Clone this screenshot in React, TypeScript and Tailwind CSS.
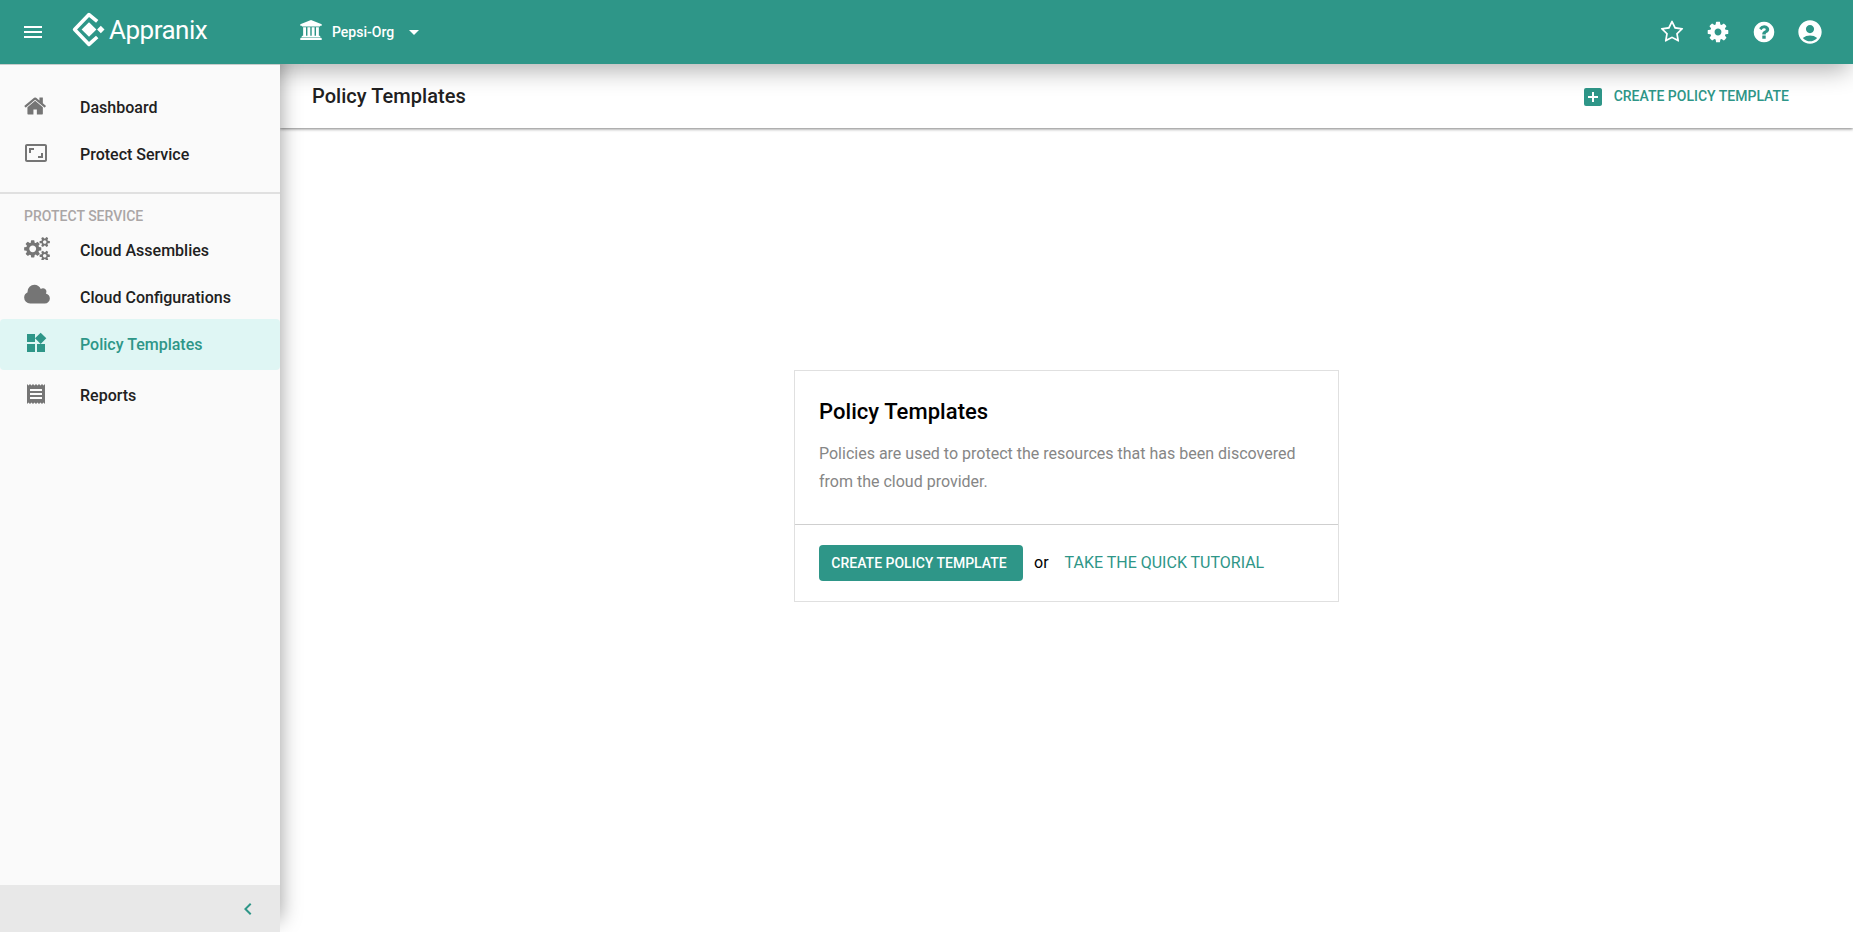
import React from "react";
import {
  MdMenu,
  MdAspectRatio,
  MdWidgets,
  MdReceipt,
  MdAccountCircle,
  MdAddBox,
  MdArrowDropDown,
  MdChevronLeft,
} from "react-icons/md";

const paths = {
  home: "M1408 992v480q0 26-19 45t-45 19h-384v-384h-256v384h-384q-26 0-45-19t-19-45v-480q0-1 .5-3t.5-3l575-474 575 474q1 2 1 6zm223-69l-62 74q-8 9-21 11h-3q-13 0-21-7l-692-577-692 577q-12 8-24 7-13-2-21-11l-62-74q-8-10-7-23.5t11-21.5l719-599q32-26 76-26t76 26l244 204v-195q0-14 9-23t23-9h192q14 0 23 9t9 23v408l219 182q10 8 11 21.5t-7 23.5z",
  cloud:
    "M1984 1152q0 159-112.5 271.5t-271.5 112.5h-1088q-185 0-316.5-131.5t-131.5-316.5q0-132 71-241.5t187-163.5q-2-28-2-43 0-212 150-362t362-150q158 0 286.5 88t187.5 230q70-62 166-62 106 0 181 75t75 181q0 75-41 138 129 30 213 134.5t84 239.5z",
  cogs: "M896 960q0-106-75-181t-181-75-181 75-75 181 75 181 181 75 181-75 75-181zm768 512q0-52-38-90t-90-38-90 38-38 90q0 53 37.5 90.5t90.5 37.5 90.5-37.5 37.5-90.5zm0-1024q0-52-38-90t-90-38-90 38-38 90q0 53 37.5 90.5t90.5 37.5 90.5-37.5 37.5-90.5zm-384 421v185q0 10-7 19.5t-16 10.5l-155 24q-11 35-32 76 34 48 90 115 7 11 7 20 0 12-7 19-23 30-82.5 89.5t-78.5 59.5q-11 0-21-7l-115-90q-37 19-77 31-11 108-23 155-7 24-30 24h-186q-11 0-20-7.5t-10-17.5l-23-153q-34-10-75-31l-118 89q-7 7-20 7-11 0-21-8-144-133-144-160 0-9 7-19 10-14 41-53t47-61q-23-44-35-82l-152-24q-10-1-17-9.5t-7-19.5v-185q0-10 7-19.5t16-10.5l155-24q11-35 32-76-34-48-90-115-7-11-7-20 0-12 7-20 22-30 82-89t79-59q11 0 21 7l115 90q34-18 77-32 11-108 23-154 7-24 30-24h186q11 0 20 7.5t10 17.5l23 153q34 10 75 31l118-89q8-7 20-7 11 0 21 8 144 133 144 160 0 8-7 19-12 16-42 54t-45 60q23 48 34 82l152 23q10 2 17 10.5t7 19.5zm640 533v140q0 16-149 31-12 27-30 52 51 113 51 138 0 4-4 7-122 71-124 71-8 0-46-47t-52-68q-20 2-30 2t-30-2q-14 21-52 68t-46 47q-2 0-124-71-4-3-4-7 0-25 51-138-18-25-30-52-149-15-149-31v-140q0-16 149-31 13-29 30-52-51-113-51-138 0-4 4-7 4-2 35-20t59-34 30-16q8 0 46 46.5t52 67.5q20-2 30-2t30 2q51-71 92-112l6-2q4 0 124 70 4 3 4 7 0 25-51 138 17 23 30 52 149 15 149 31zm0-1024v140q0 16-149 31-12 27-30 52 51 113 51 138 0 4-4 7-122 71-124 71-8 0-46-47t-52-68q-20 2-30 2t-30-2q-14 21-52 68t-46 47q-2 0-124-71-4-3-4-7 0-25 51-138-18-25-30-52-149-15-149-31v-140q0-16 149-31 13-29 30-52-51-113-51-138 0-4 4-7 4-2 35-20t59-34 30-16q8 0 46 46.5t52 67.5q20-2 30-2t30 2q51-71 92-112l6-2q4 0 124 70 4 3 4 7 0 25-51 138 17 23 30 52 149 15 149 31z",
  bank: "M960 0l960 384v128h-128q0 26-20.5 45t-48.5 19h-1526q-28 0-48.5-19t-20.5-45h-128v-128zm-704 640h256v768h128v-768h256v768h128v-768h256v768h128v-768h256v768h59q28 0 48.5 19t20.5 45v64h-1664v-64q0-26 20.5-45t48.5-19h59v-768zm1595 960q28 0 48.5 19t20.5 45v128h-1920v-128q0-26 20.5-45t48.5-19h1782z",
  star: "M1201 1004l306-297-422-62-189-382-189 382-422 62 306 297-73 421 378-199 377 199zm527-357q0 22-26 48l-363 354 86 500q1 7 1 20 0 50-41 50-19 0-40-12l-449-236-449 236q-22 12-40 12-21 0-31.5-14.5t-10.5-35.5q0-6 2-20l86-500-364-354q-25-27-25-48 0-37 56-46l502-73 225-455q19-41 49-41t49 41l225 455 502 73q56 9 56 46z",
  cog: "M1152 896q0-106-75-181t-181-75-181 75-75 181 75 181 181 75 181-75 75-181zm512-109v222q0 12-8 23t-20 13l-185 28q-19 54-39 91 35 50 107 138 10 12 10 25t-9 23q-27 37-99 108t-94 71q-12 0-26-9l-138-108q-44 23-91 38-16 136-29 186-7 28-36 28h-222q-14 0-24.5-8.5t-11.5-21.5l-28-184q-49-16-90-37l-141 107q-10 9-25 9-14 0-25-11-126-114-165-168-7-10-7-23 0-12 8-23 15-21 51-66.5t54-70.5q-27-50-41-99l-183-27q-13-2-21-12.5t-8-23.5v-222q0-12 8-23t19-13l186-28q14-46 39-92-40-57-107-138-10-12-10-24 0-10 9-23 26-36 98.5-107.5t94.5-71.5q13 0 26 10l138 107q44-23 91-38 16-136 29-186 7-28 36-28h222q14 0 24.5 8.5t11.5 21.5l28 184q49 16 90 37l142-107q9-9 24-9 13 0 25 10 129 119 165 170 7 8 7 22 0 12-8 23-15 21-51 66.5t-54 70.5q26 50 41 98l183 28q13 2 21 12.5t8 23.5z",
  help: "M1024 1376v-192q0-14-9-23t-23-9h-192q-14 0-23 9t-9 23v192q0 14 9 23t23 9h192q14 0 23-9t9-23zm256-672q0-88-55.5-163t-138.5-116-170-41q-243 0-371 213-15 24 8 42l132 100q7 6 19 6 16 0 25-12 53-68 86-92 34-24 86-24 48 0 85.5 26t37.5 59q0 38-20 61t-68 45q-63 28-115.5 86.5t-52.5 125.5v36q0 14 9 23t23 9h192q14 0 23-9t9-23q0-19 21.5-49.5t54.5-49.5q32-18 49-28.5t46-35 44.5-48 28-60.5 12.5-81zm384 192q0 209-103 385.5t-279.5 279.5-385.5 103-385.5-103-279.5-279.5-103-385.5 103-385.5 279.5-279.5 385.5-103 385.5 103 279.5 279.5 103 385.5z",
};

function Glyph({ d, box, className }: { d: string; box: string; className: string }) {
  return (
    <svg viewBox={box} className={className} fill="currentColor" aria-hidden="true">
      <path d={d} />
    </svg>
  );
}

function LogoMark() {
  return (
    <svg viewBox="0 0 33 36" className="h-9 w-[33px]" fill="none" aria-hidden="true">
      <path d="M25.2 9.4 17 2.6 2.6 17.5 17 32.4 25.2 25" stroke="#fff" strokeWidth="3.6" strokeLinejoin="round" />
      <path d="M17 10.2 24.4 17.5 17 24.8 9.6 17.5Z" fill="#fff" />
      <path d="M28.8 13.8 32.5 17.5 28.8 21.2 25.1 17.5Z" fill="#fff" />
    </svg>
  );
}

function NavItem({
  icon,
  label,
  active,
  className,
}: {
  icon: React.ReactNode;
  label: string;
  active?: boolean;
  className: string;
}) {
  return (
    <a
      className={`flex items-center pl-6 text-base font-medium ${
        active ? "rounded bg-[#dff6f4] text-[#2e9688]" : "text-[#212121]"
      } ${className}`}
    >
      <span className={`flex w-14 shrink-0 -translate-y-0.5 ${active ? "" : "text-[#757575]"}`}>{icon}</span>
      {label}
    </a>
  );
}

export default function App() {
  return (
    <div className="flex h-[932px] flex-col overflow-hidden bg-white font-['Roboto',sans-serif]">
      <header className="relative z-10 flex h-16 shrink-0 items-center bg-[#2e9688] text-white shadow-[0_10px_24px_-4px_rgba(0,0,0,0.32)]">
        <MdMenu className="ml-[21px] size-6" />
        <div className="ml-[27px] flex w-[228px] items-center gap-1 pb-1">
          <LogoMark />
          <span className="text-[26px] leading-8 tracking-[-0.5px]">Appranix</span>
        </div>
        <Glyph d={paths.bank} box="0 0 1920 1792" className="mb-1 h-5 w-[22px]" />
        <span className="ml-[10px] text-sm font-medium">Pepsi-Org</span>
        <MdArrowDropDown className="ml-2 size-6" />
        <div className="ml-auto flex items-center gap-[22px] pr-[29px]">
          <Glyph d={paths.star} box="0 0 1792 1792" className="size-6" />
          <Glyph d={paths.cog} box="0 0 1792 1792" className="size-6" />
          <Glyph d={paths.help} box="0 0 1792 1792" className="size-6" />
          <MdAccountCircle className="-ml-0.5 size-7" />
        </div>
      </header>
      <div className="flex min-h-0 flex-1">
        <aside className="relative z-20 flex w-[280px] shrink-0 flex-col border-t border-[#c8cccb] bg-[#fafafa] shadow-[0_-12px_20px_0_rgba(0,0,0,0.4)] [clip-path:inset(0_-40px_0_0)]">
          <nav className="pt-[19px]">
            <NavItem className="h-[47px]" label="Dashboard" icon={<Glyph d={paths.home} box="0 0 1792 1792" className="size-6" />} />
            <NavItem className="h-[47px]" label="Protect Service" icon={<MdAspectRatio className="size-6" />} />
          </nav>
          <div className="mt-[14px] h-0.5 bg-[#e0e0e0]" />
          <h2 className="mt-3 mb-px pl-6 text-sm leading-5 font-medium text-[#aaa6a6]">PROTECT SERVICE</h2>
          <nav>
            <NavItem className="h-[47px]" label="Cloud Assemblies" icon={<Glyph d={paths.cogs} box="0 0 1920 1792" className="mb-0.5 h-6 w-[26px]" />} />
            <NavItem className="h-[45px] pt-0.5" label="Cloud Configurations" icon={<Glyph d={paths.cloud} box="64 0 1920 1792" className="mb-px h-6 w-[26px]" />} />
            <NavItem active className="h-[51px]" label="Policy Templates" icon={<MdWidgets className="size-6" />} />
            <NavItem className="h-[51px]" label="Reports" icon={<MdReceipt className="size-6" />} />
          </nav>
          <div className="mt-auto flex h-[47px] items-center justify-end bg-[#e8e8e8] pr-5 text-[#2e9688]">
            <MdChevronLeft className="size-6" />
          </div>
        </aside>
        <main className="flex flex-1 flex-col">
          <div className="flex h-16 shrink-0 items-center bg-white pr-16 pl-8 shadow-[0_1px_3px_rgba(0,0,0,0.5)]">
            <h1 className="text-xl font-medium tracking-[0.04px] text-[#212121]">Policy Templates</h1>
            <button className="ml-auto flex items-center gap-[9px] text-sm font-medium text-[#2e9688]">
              <MdAddBox className="mt-0.5 size-6" />
              CREATE POLICY TEMPLATE
            </button>
          </div>
          <div className="flex flex-1 justify-center pt-[242px]">
            <section className="h-[232px] w-[545px] border border-[#e0e0e0] bg-white">
              <div className="h-[154px] border-b border-[#cfcfcf] px-6 pt-[25px]">
                <h2 className="text-[22px] leading-8 font-medium tracking-[0.05px] text-black">Policy Templates</h2>
                <p className="mt-3 w-[490px] text-base leading-7 text-[#868686]">
                  Policies are used to protect the resources that has been discovered from the cloud provider.
                </p>
              </div>
              <div className="flex h-[76px] items-center pl-6">
                <button className="h-9 w-[204px] rounded bg-[#2e9688] pr-1 text-sm font-medium text-white">CREATE POLICY TEMPLATE</button>
                <span className="ml-[11px] text-base text-black">or</span>
                <a className="ml-4 text-base text-[#2e9688]">TAKE THE QUICK TUTORIAL</a>
              </div>
            </section>
          </div>
        </main>
      </div>
    </div>
  );
}
